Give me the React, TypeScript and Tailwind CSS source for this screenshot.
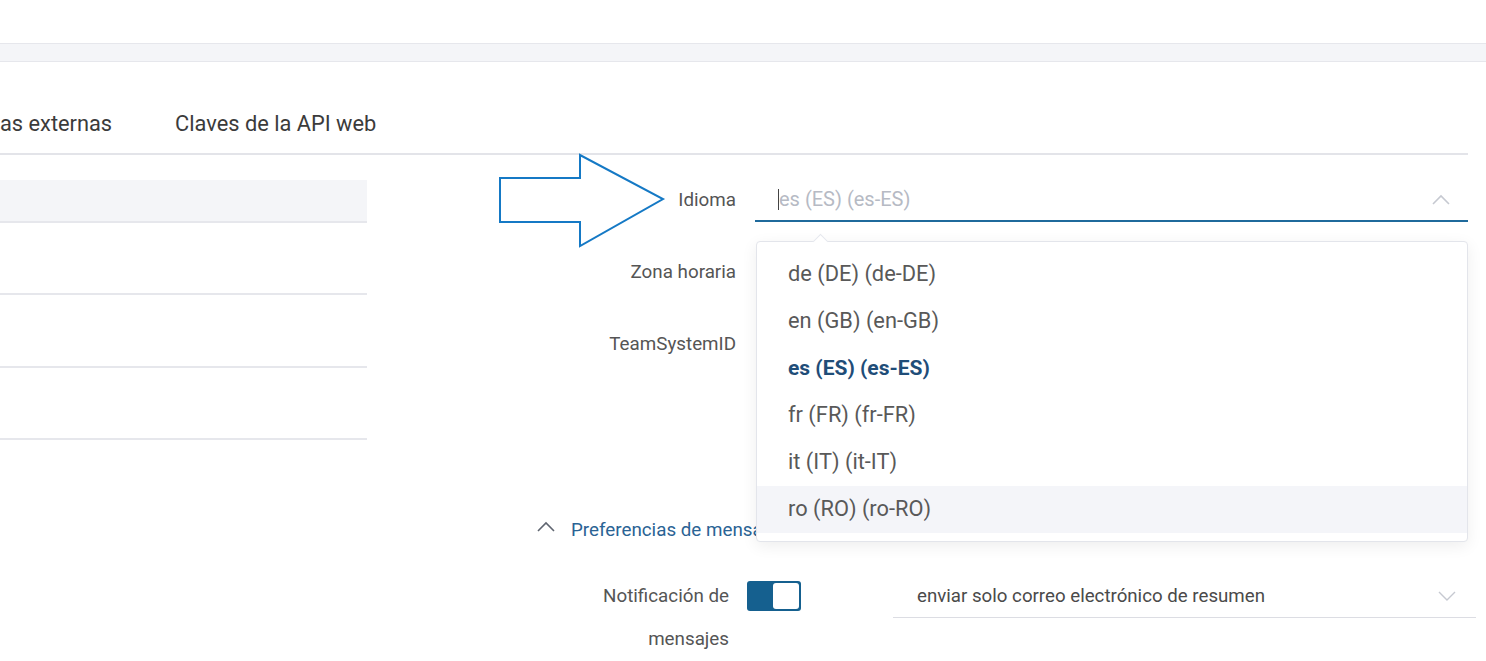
import React from "react";

const items = [
  { t: "de (DE) (de-DE)" },
  { t: "en (GB) (en-GB)" },
  { t: "es (ES) (es-ES)", selected: true },
  { t: "fr (FR) (fr-FR)" },
  { t: "it (IT) (it-IT)" },
  { t: "ro (RO) (ro-RO)", hover: true },
];

function ChevronUp({ className }: { className?: string }) {
  return (
    <svg width="18" height="11" viewBox="0 0 18 11" className={className} fill="none">
      <path d="M1 10 L9 2 L17 10" stroke="currentColor" strokeWidth="1.6" />
    </svg>
  );
}

function ChevronDown({ className }: { className?: string }) {
  return (
    <svg width="18" height="11" viewBox="0 0 18 11" className={className} fill="none">
      <path d="M1 1 L9 9 L17 1" stroke="currentColor" strokeWidth="1.4" />
    </svg>
  );
}

export default function App() {
  return (
    <div className="relative w-[1486px] h-[661px] overflow-hidden bg-white font-['Roboto','Liberation_Sans',sans-serif]">
      <div className="h-[43px]" />
      <div className="h-[19px] bg-[#f4f5f8] border-t border-b border-[#e6e7ec]" />
      <div className="flex items-end h-[93px] pb-[16px] border-b-2 border-[#e3e4e9] mr-[18px] text-[21.8px] leading-[26px] text-[#3b3b3b]">
        <span>as externas</span>
        <span className="ml-[63px]">Claves de la API web</span>
      </div>

      <div className="flex">
        {/* left list */}
        <div className="w-[367px] shrink-0 pt-[25px]">
          <div className="h-[43px] bg-[#f4f5f8] border-b-2 border-[#e6e7ec]" />
          <div className="h-[72px] border-b-2 border-[#e6e7ec]" />
          <div className="h-[73px] border-b-2 border-[#e6e7ec]" />
          <div className="h-[72px] border-b-2 border-[#e6e7ec]" />
        </div>

        {/* right form */}
        <div className="flex-1 pt-[23px]">
          <div className="flex flex-col gap-[28px]">
            <div className="flex items-center h-[44px]">
              <div className="w-[369px] text-right text-[18.8px] text-[#555]">Idioma</div>
              <div className="relative ml-[19px] w-[713px] h-[44px] border-b-2 border-[#1f6a9c] flex items-center justify-between pl-[23px] pr-[18px]">
                <div className="flex items-center">
                  <span className="w-px h-[21px] bg-[#444]" />
                  <span className="text-[20px] text-[#b6bac4]">es (ES) (es-ES)</span>
                </div>
                <ChevronUp className="text-[#c6c9d1]" />

                <div className="absolute z-10 left-[1px] top-[63px] w-[712px] h-[301px] bg-white border border-[#e3e5eb] rounded-[4px] shadow-[0_4px_16px_rgba(0,0,0,0.07)] pt-[9px]">
                  <div className="absolute left-[58px] -top-[6px] w-[11px] h-[11px] bg-white border-l border-t border-[#e6e8ee] rotate-45" />
                  {items.map((it) => (
                    <div
                      key={it.t}
                      className={
                        "relative h-[47px] flex items-center pl-[31px] " +
                        (it.selected ? "text-[21px] font-bold text-[#1f4d78] " : "text-[21.8px] text-[#595959] ") +
                        (it.hover ? "bg-[#f4f5f9]" : "")
                      }
                    >
                      {it.t}
                    </div>
                  ))}
                </div>
              </div>
            </div>
            <div className="flex items-center h-[44px]">
              <div className="w-[369px] text-right text-[18.8px] text-[#555]">Zona horaria</div>
            </div>
            <div className="flex items-center h-[44px]">
              <div className="w-[369px] text-right text-[18.8px] text-[#555]">TeamSystemID</div>
            </div>
          </div>

          <div className="flex items-center h-[24px] mt-[152px]">
            <ChevronUp className="ml-[170px] -mt-[8px] text-[#5f6570]" />
            <span className="ml-[16px] text-[18.8px] text-[#2a6394]">Preferencias de mensajes</span>
          </div>

          <div className="flex items-start mt-[33px]">
            <div className="w-[362px] text-right text-[18.8px] leading-[43px] text-[#555]">
              Notificación de
              <br />
              mensajes
            </div>
            <div className="ml-[18px] mt-[6px] w-[54px] h-[30px] rounded-[3px] bg-[#15608f] p-[2px] flex justify-end">
              <div className="w-[26px] h-[26px] bg-white rounded-[3px]" />
            </div>
            <div className="ml-[92px] w-[583px] h-[43px] border-b border-[#dcdde3] flex items-center justify-between pl-[24px] pr-[20px]">
              <span className="text-[18.7px] text-[#4a4a4a]">enviar solo correo electrónico de resumen</span>
              <ChevronDown className="text-[#c6c9d1]" />
            </div>
          </div>
        </div>
      </div>

      {/* annotation arrow */}
      <svg
        className="absolute left-[498px] top-[153px]"
        width="168"
        height="96"
        viewBox="0 0 168 96"
        fill="none"
      >
        <polygon
          points="2,25 82,25 82,2 165,46 82,93 82,69 2,69"
          stroke="#1579c5"
          strokeWidth="2"
          fill="white"
        />
      </svg>
    </div>
  );
}
